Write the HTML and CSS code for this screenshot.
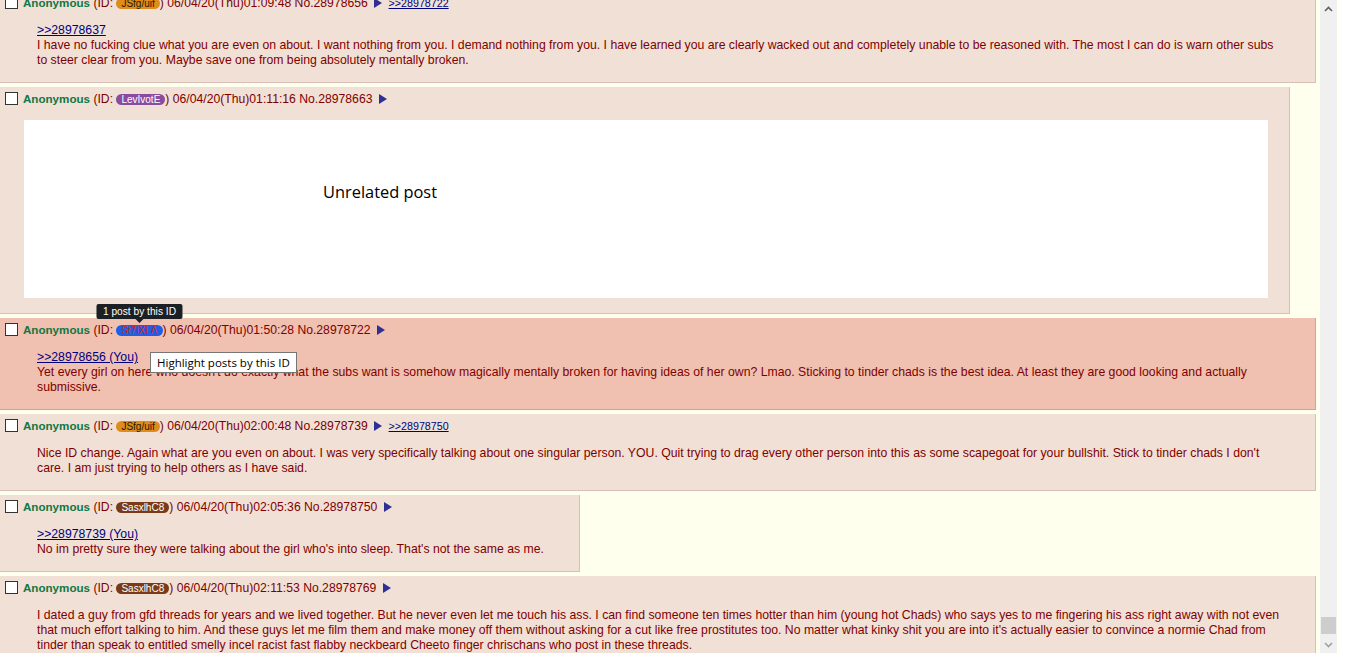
FILE: index.html
```html
<!DOCTYPE html>
<html lang="en">
<head>
  <meta charset="UTF-8">
  <title>Thread</title>
  <link rel="stylesheet" href="styles.css">
</head>
<body>
  <div class="window">
    <div class="page">
      <div class="thread">

        <div class="post">
          <div class="post-info">
            <span class="check"></span><span class="name">Anonymous</span> (ID: <span class="uid uid-orange">JSfg/uif</span>) 06/04/20(Thu)01:09:48 No.28978656 <svg class="menu" viewBox="0 0 8 10"><path d="M0 0 L8 5 L0 10 Z"/></svg> <a class="backlink" href="#">&gt;&gt;28978722</a>
          </div>
          <blockquote class="message">
            <a class="quotelink" href="#">&gt;&gt;28978637</a><br>
            I have no fucking clue what you are even on about. I want nothing from you. I demand nothing from you. I have learned you are clearly wacked out and completely unable to be reasoned with. The most I can do is warn other subs to steer clear from you. Maybe save one from being absolutely mentally broken.
          </blockquote>
        </div>

        <div class="post">
          <div class="post-info">
            <span class="check"></span><span class="name">Anonymous</span> (ID: <span class="uid uid-purple">LevIvotE</span>) 06/04/20(Thu)01:11:16 No.28978663 <svg class="menu" viewBox="0 0 8 10"><path d="M0 0 L8 5 L0 10 Z"/></svg>
          </div>
          <div class="unrelated">Unrelated post</div>
        </div>

        <div class="post highlight">
          <div class="post-info">
            <span class="check"></span><span class="name">Anonymous</span> (ID: <span class="uid uid-blue">St7lXLA<span class="tip">1 post by this ID</span></span>) 06/04/20(Thu)01:50:28 No.28978722 <svg class="menu" viewBox="0 0 8 10"><path d="M0 0 L8 5 L0 10 Z"/></svg>
          </div>
          <blockquote class="message">
            <a class="quotelink" href="#">&gt;&gt;28978656 (You)</a><br>
            Yet every girl on here who doesn't do exactly what the subs want is somehow magically mentally broken for having ideas of her own? Lmao. Sticking to tinder chads is the best idea. At least they are good looking and actually submissive.
          </blockquote>
          <div class="native-tip">Highlight posts by this ID</div>
        </div>

        <div class="post">
          <div class="post-info">
            <span class="check"></span><span class="name">Anonymous</span> (ID: <span class="uid uid-orange">JSfg/uif</span>) 06/04/20(Thu)02:00:48 No.28978739 <svg class="menu" viewBox="0 0 8 10"><path d="M0 0 L8 5 L0 10 Z"/></svg> <a class="backlink" href="#">&gt;&gt;28978750</a>
          </div>
          <blockquote class="message">
            Nice ID change. Again what are you even on about. I was very specifically talking about one singular person. YOU. Quit trying to drag every other person into this as some scapegoat for your bullshit. Stick to tinder chads I don't care. I am just trying to help others as I have said.
          </blockquote>
        </div>

        <div class="post">
          <div class="post-info">
            <span class="check"></span><span class="name">Anonymous</span> (ID: <span class="uid uid-brown">SasxlhC8</span>) 06/04/20(Thu)02:05:36 No.28978750 <svg class="menu" viewBox="0 0 8 10"><path d="M0 0 L8 5 L0 10 Z"/></svg>
          </div>
          <blockquote class="message">
            <a class="quotelink" href="#">&gt;&gt;28978739 (You)</a><br>
            No im pretty sure they were talking about the girl who's into sleep. That's not the same as me.
          </blockquote>
        </div>

        <div class="post">
          <div class="post-info">
            <span class="check"></span><span class="name">Anonymous</span> (ID: <span class="uid uid-brown">SasxlhC8</span>) 06/04/20(Thu)02:11:53 No.28978769 <svg class="menu" viewBox="0 0 8 10"><path d="M0 0 L8 5 L0 10 Z"/></svg>
          </div>
          <blockquote class="message">
            I dated a guy from gfd threads for years and we lived together. But he never even let me touch his ass. I can find someone ten times hotter than him (young hot Chads) who says yes to me fingering his ass right away with not even that much effort talking to him. And these guys let me film them and make money off them without asking for a cut like free prostitutes too. No matter what kinky shit you are into it's actually easier to convince a normie Chad from tinder than speak to entitled smelly incel racist fast flabby neckbeard Cheeto finger chrischans who post in these threads.
          </blockquote>
        </div>

      </div>
    </div>

    <div class="scrollbar">
      <div class="scroll-btn">
        <svg viewBox="0 0 9 6"><path d="M1 5 L4.5 1.5 L8 5" fill="none" stroke="#606060" stroke-width="1.6"/></svg>
      </div>
      <div class="scroll-track"><div class="scroll-thumb"></div></div>
      <div class="scroll-btn">
        <svg viewBox="0 0 9 6"><path d="M1 1 L4.5 4.5 L8 1" fill="none" stroke="#a0a0a0" stroke-width="1.6"/></svg>
      </div>
    </div>
    <div class="frame-edge"></div>
    <div class="outside"></div>
  </div>
</body>
</html>
```

FILE: styles.css
```css
html, body {
  margin: 0;
  height: 100%;
  overflow: hidden;
}
body {
  font-family: 'Liberation Sans', Arial, sans-serif;
  font-size: 12px;
  line-height: 15px;
  color: #800000;
  background: #fff;
}
.window {
  display: flex;
  height: 653px;
}
.page {
  width: 1320px;
  flex: none;
  background: #ffffee;
  overflow: hidden;
}
.thread {
  width: 1316px;
  margin-top: -13px;
}
.post {
  display: table;
  position: relative;
  margin: 4px 0;
  padding: 2px;
  background: #f0e0d6;
  border-right: 1px solid #d9bfb7;
  border-bottom: 1px solid #d9bfb7;
}
.post.highlight {
  background: #f0c0b0;
  border-color: #d99f91;
}
.post-info {
  height: 20px;
  line-height: 20px;
  font-size: 12.2px;
  white-space: nowrap;
}
.check {
  display: inline-block;
  width: 11px;
  height: 11px;
  border: 1px solid #333;
  background: #fff;
  margin: 0 5px 0 3px;
  vertical-align: -2px;
}
.name {
  color: #117743;
  font-weight: bold;
  font-size: 11.6px;
}
.uid {
  position: relative;
  display: inline-block;
  padding: 0 5px;
  border-radius: 7px;
  font-size: 10px;
  line-height: 11px;
  color: #fff;
}
.uid-orange {
  background: #e08c1c;
  color: #2a1a00;
}
.uid-purple {
  background: #8a4c9f;
}
.uid-blue {
  background: #1f5fe6;
  color: #e0202a;
}
.uid-brown {
  background: #7a3a17;
}
.tip {
  position: absolute;
  bottom: 100%;
  left: 50%;
  transform: translateX(-50%);
  margin-bottom: 6px;
  padding: 0 6px;
  background: #1c2025;
  color: #fff;
  font-size: 10.2px;
  line-height: 15px;
  border-radius: 2px;
  white-space: nowrap;
}
.tip::after {
  content: '';
  position: absolute;
  top: 100%;
  left: 50%;
  margin-left: -4px;
  border: 4px solid transparent;
  border-top-color: #1c2025;
}
.menu {
  width: 8px;
  height: 10px;
  margin: 0 3px;
  vertical-align: -1px;
  fill: #2f2f94;
}
.backlink {
  color: #000080;
  font-size: 10.7px;
}
.quotelink {
  color: #000080;
}
.message {
  margin: 10px 33px 12px 35px;
  font-size: 12.25px;
}
.unrelated {
  width: 1244px;
  height: 178px;
  margin: 11px 19px 13px 22px;
  padding: 61px 0 0 299px;
  box-sizing: border-box;
  background: #fff;
  color: #000;
  font-family: 'Open Sans', sans-serif;
  font-size: 16.4px;
  line-height: 22px;
}
.native-tip {
  position: absolute;
  top: 34px;
  left: 150px;
  padding: 0 6px;
  background: #fff;
  border: 1px solid #767676;
  color: #000;
  font-family: 'Open Sans', sans-serif;
  font-size: 11.5px;
  line-height: 19px;
  white-space: nowrap;
}
.scrollbar {
  width: 17px;
  flex: none;
  background: #f0f0f0;
  display: flex;
  flex-direction: column;
}
.scroll-btn {
  height: 17px;
  display: flex;
  align-items: center;
  justify-content: center;
}
.scroll-btn svg {
  width: 9px;
  height: 6px;
}
.scroll-track {
  flex: 1;
  display: flex;
  flex-direction: column;
  justify-content: flex-end;
  padding-bottom: 2px;
}
.scroll-thumb {
  height: 17px;
  margin: 0 1px;
  background: #cdcdcd;
}
.frame-edge {
  width: 2px;
  margin-left: 1px;
  flex: none;
  background: #fffff2;
}
.outside {
  flex: 1;
  background: #fff;
}
```
